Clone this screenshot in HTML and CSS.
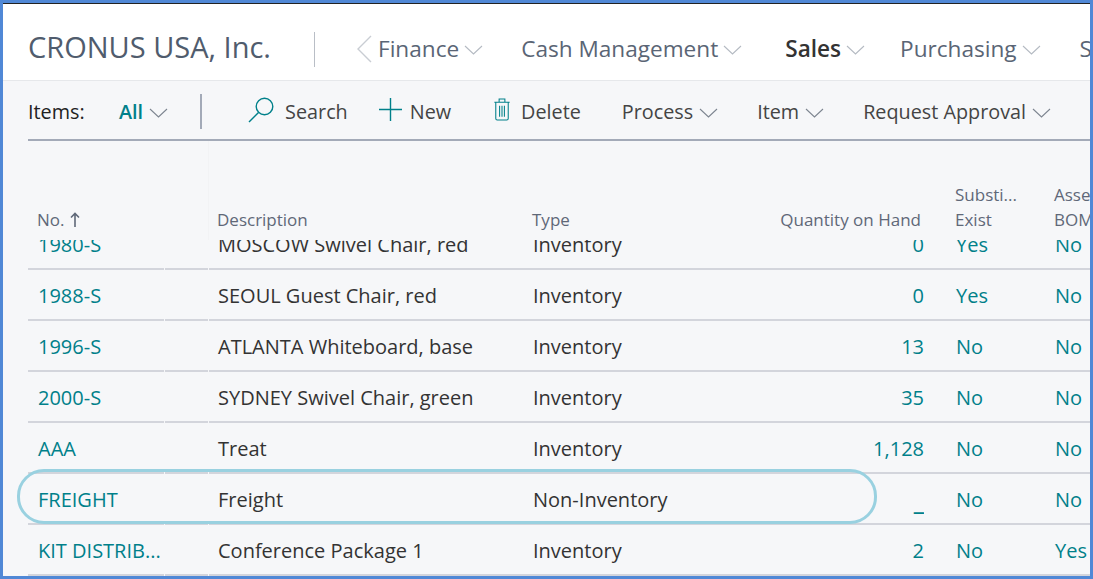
FILE: index.html

```html
<!DOCTYPE html>
<html>
<head>
  <title>Items - CRONUS USA, Inc.</title>
  <meta name="viewport" content="width=device-width, initial-scale=1">
  <link rel="stylesheet" href="styles.css">
</head>
<body>
  <div class="frame">
    <header class="topbar">
      <div class="company">CRONUS USA, Inc.</div>
      <div class="topbar-sep"></div>
      <svg class="nav-back" width="16" height="28" viewBox="0 0 16 28"><path d="M15 1 L2 14 L15 27" fill="none" stroke="#c9cdd3" stroke-width="1.4"/></svg>
      <nav class="nav">
        <a class="nav-item nav-finance">Finance<svg class="chev" width="19" height="10" viewBox="0 0 19 10"><path d="M1 1 L9.5 9 L18 1" fill="none" stroke="#b4bac2" stroke-width="1.1"/></svg></a>
        <a class="nav-item nav-cash">Cash Management<svg class="chev" width="19" height="10" viewBox="0 0 19 10"><path d="M1 1 L9.5 9 L18 1" fill="none" stroke="#b4bac2" stroke-width="1.1"/></svg></a>
        <a class="nav-item nav-sales">Sales<svg class="chev" width="19" height="10" viewBox="0 0 19 10"><path d="M1 1 L9.5 9 L18 1" fill="none" stroke="#b4bac2" stroke-width="1.1"/></svg></a>
        <a class="nav-item nav-purchasing">Purchasing<svg class="chev" width="19" height="10" viewBox="0 0 19 10"><path d="M1 1 L9.5 9 L18 1" fill="none" stroke="#b4bac2" stroke-width="1.1"/></svg></a>
        <a class="nav-item nav-more">S</a>
      </nav>
    </header>

    <div class="toolbar">
      <span class="page-name">Items:</span>
      <span class="view-all">All</span>
      <svg class="chev chev-all" width="19" height="10" viewBox="0 0 19 10"><path d="M1 1 L9.5 9 L18 1" fill="none" stroke="#7d8590" stroke-width="1.1"/></svg>
      <div class="toolbar-sep"></div>
      <a class="action action-search">
        <svg class="action-icon" width="27" height="26" viewBox="0 0 27 26"><circle cx="16.5" cy="9.5" r="8.3" fill="none" stroke="#00808a" stroke-width="1.4"/><path d="M10.5 15.5 L1 25" fill="none" stroke="#00808a" stroke-width="1.4"/></svg>
        Search
      </a>
      <a class="action action-new">
        <svg class="action-icon" width="23" height="23" viewBox="0 0 23 23"><path d="M11.5 0 V23 M0 11.5 H23" fill="none" stroke="#00808a" stroke-width="1.4"/></svg>
        New
      </a>
      <a class="action action-delete">
        <svg class="action-icon" width="18" height="23" viewBox="0 0 18 24"><path d="M1 4.5 H17 M6 4.5 V1 H12 V4.5 M2.5 4.5 V21.5 Q2.5 23 4 23 H14 Q15.5 23 15.5 21.5 V4.5 M6.5 8 V19.5 M9 8 V19.5 M11.5 8 V19.5" fill="none" stroke="#00808a" stroke-width="1.1"/></svg>
        Delete
      </a>
      <a class="action action-menu action-process">Process<svg class="chev" width="19" height="10" viewBox="0 0 19 10"><path d="M1 1 L9.5 9 L18 1" fill="none" stroke="#7d8590" stroke-width="1.1"/></svg></a>
      <a class="action action-menu action-item">Item<svg class="chev" width="19" height="10" viewBox="0 0 19 10"><path d="M1 1 L9.5 9 L18 1" fill="none" stroke="#7d8590" stroke-width="1.1"/></svg></a>
      <a class="action action-menu action-approval">Request Approval<svg class="chev" width="19" height="10" viewBox="0 0 19 10"><path d="M1 1 L9.5 9 L18 1" fill="none" stroke="#7d8590" stroke-width="1.1"/></svg></a>
    </div>

    <div class="list">
      <div class="list-head cols">
        <div class="th th-no">No.<svg width="10" height="15" viewBox="0 0 10 15"><path d="M5 15 V1.5 M1 5.5 L5 1.5 L9 5.5" fill="none" stroke="#5f6878" stroke-width="1.6"/></svg></div>
        <div class="th th-desc">Description</div>
        <div class="th">Type</div>
        <div class="th th-num">Quantity on Hand</div>
        <div class="th th-two">Substi...<br>Exist</div>
        <div class="th th-two th-last">Asse<br>BOM</div>
      </div>

      <div class="rows-clip">
        <div class="rows">
          <div class="row cols">
            <a class="cell link">1980-S</a><div class="cell">MOSCOW Swivel Chair, red</div><div class="cell">Inventory</div><a class="cell link num">0</a><a class="cell link">Yes</a><a class="cell link">No</a>
          </div>
          <div class="row cols">
            <a class="cell link">1988-S</a><div class="cell">SEOUL Guest Chair, red</div><div class="cell">Inventory</div><a class="cell link num">0</a><a class="cell link">Yes</a><a class="cell link">No</a>
          </div>
          <div class="row cols">
            <a class="cell link">1996-S</a><div class="cell">ATLANTA Whiteboard, base</div><div class="cell">Inventory</div><a class="cell link num">13</a><a class="cell link">No</a><a class="cell link">No</a>
          </div>
          <div class="row cols">
            <a class="cell link">2000-S</a><div class="cell">SYDNEY Swivel Chair, green</div><div class="cell">Inventory</div><a class="cell link num">35</a><a class="cell link">No</a><a class="cell link">No</a>
          </div>
          <div class="row cols">
            <a class="cell link">AAA</a><div class="cell">Treat</div><div class="cell">Inventory</div><a class="cell link num">1,128</a><a class="cell link">No</a><a class="cell link">No</a>
          </div>
          <div class="row cols">
            <a class="cell link">FREIGHT</a><div class="cell">Freight</div><div class="cell">Non-Inventory</div><a class="cell link num blank">_</a><a class="cell link">No</a><a class="cell link">No</a>
          </div>
          <div class="row cols">
            <a class="cell link">KIT DISTRIB...</a><div class="cell">Conference Package 1</div><div class="cell">Inventory</div><a class="cell link num">2</a><a class="cell link">No</a><a class="cell link">Yes</a>
          </div>
        </div>
      </div>
      <div class="highlight"></div>
    </div>
  </div>
</body>
</html>
```

FILE: styles.css

```css
* {
  box-sizing: border-box;
}

html, body {
  margin: 0;
  height: 100%;
  overflow: hidden;
}

body {
  font-family: "Open Sans", "Noto Sans", sans-serif;
  background-color: #f6f7f9;
  color: #333;
}

.frame {
  width: 1093px;
  height: 579px;
  border: 3px solid #5088d6;
  overflow: hidden;
  display: flex;
  flex-direction: column;
  position: relative;
}

/* top bar */
.topbar {
  height: 78px;
  flex: none;
  background-color: #fff;
  border-top: 1px solid #222;
  border-bottom: 1px solid #e6e8eb;
  display: flex;
  align-items: center;
  padding-left: 25px;
  overflow: hidden;
  white-space: nowrap;
}

.company {
  font-size: 29px;
  color: #505c6d;
  width: 286px;
  flex: none;
  padding-top: 8px;
}

.topbar-sep {
  width: 1px;
  height: 35px;
  background-color: #b9bec6;
  flex: none;
  margin-top: 14px;
}

.nav-back {
  flex: none;
  margin-left: 41px;
  margin-top: 14px;
}

.nav {
  display: flex;
  align-items: center;
  margin-top: 12px;
}

.nav-item {
  font-size: 22.6px;
  color: #5a6575;
  display: flex;
  align-items: center;
}

.nav-item .chev {
  margin-left: 5px;
  margin-top: 3px;
}

.nav-finance {
  margin-left: 6px;
}

.nav-cash {
  margin-left: 38px;
}

.nav-sales {
  margin-left: 43px;
  font-weight: 600;
  color: #333;
}

.nav-purchasing {
  margin-left: 35px;
}

.nav-more {
  margin-left: 39px;
}

.chev {
  flex: none;
}

/* action bar */
.toolbar {
  height: 60px;
  flex: none;
  margin-left: 25px;
  padding-top: 3px;
  border-bottom: 2px solid #a3aab8;
  display: flex;
  align-items: center;
  white-space: nowrap;
  font-size: 19.8px;
  color: #444;
}

.page-name {
  color: #222;
  font-weight: 500;
  width: 91px;
  flex: none;
}

.view-all {
  color: #00808a;
  font-weight: 600;
}

.chev-all {
  margin-left: 6px;
  margin-top: 3px;
}

.toolbar-sep {
  width: 2px;
  height: 35px;
  background-color: #a3aab8;
  margin-left: 32px;
  flex: none;
}

.action {
  display: flex;
  align-items: center;
  gap: 10px;
}

.action-icon {
  margin-top: -4px;
}

.action-search {
  margin-left: 46px;
}

.action-new {
  margin-left: 31px;
  gap: 8px;
}

.action-delete {
  margin-left: 42px;
}

.action-menu {
  gap: 6px;
}

.action-menu .chev {
  margin-top: 3px;
}

.action-process {
  margin-left: 41px;
}

.action-item {
  margin-left: 39px;
}

.action-approval {
  margin-left: 39px;
}

/* list */
.list {
  position: relative;
  flex: 1;
  min-height: 0;
  display: flex;
  flex-direction: column;
}

.cols {
  display: grid;
  grid-template-columns: 180px 315px 220px 181px 100px 1fr;
  margin-left: 25px;
}

.list-head {
  height: 99px;
  flex: none;
  align-items: end;
  background-image: linear-gradient(#f2f3f5, #f2f3f5);
  background-size: 1px 100%;
  background-position: 180px 0;
  background-repeat: no-repeat;
}

.th {
  font-size: 17px;
  line-height: 25px;
  color: #5f6878;
  padding: 0 0 8px 9px;
  white-space: nowrap;
  overflow: hidden;
}

.th-no {
  display: flex;
  align-items: center;
  gap: 5px;
}

.th-num {
  text-align: right;
  padding-right: 3px;
  padding-left: 0;
}

.th-two {
  padding-left: 31px;
}

.th-last {
  padding-left: 30px;
}

.rows-clip {
  flex: 1;
  min-height: 0;
  overflow: hidden;
}

.rows {
  margin-top: -21px;
}

/* separator has small breaks under the resize handles */
.row {
  height: 51px;
  padding: 2px 0;
  align-items: center;
  font-size: 20px;
  white-space: nowrap;
  background: linear-gradient(to right, #d3d5dc 136px, #f6f7f9 136px 137px, #d3d5dc 137px 180px, #f6f7f9 180px 181px, #d3d5dc 181px) bottom / 100% 2px no-repeat;
}

.cell {
  padding-left: 10px;
  overflow: hidden;
}

.link {
  color: #00808a;
}

.num {
  text-align: right;
  padding-right: 0;
}

.row .cell:nth-child(5) {
  padding-left: 32px;
}

.row .cell:nth-child(6) {
  padding-left: 31px;
}

.row .blank {
  font-size: 25px;
  font-weight: 700;
}

/* circled row */
.highlight {
  position: absolute;
  left: 14px;
  top: 328px;
  width: 860px;
  height: 55px;
  border: 3px solid #99d1e0;
  border-radius: 27px;
  pointer-events: none;
}
```
